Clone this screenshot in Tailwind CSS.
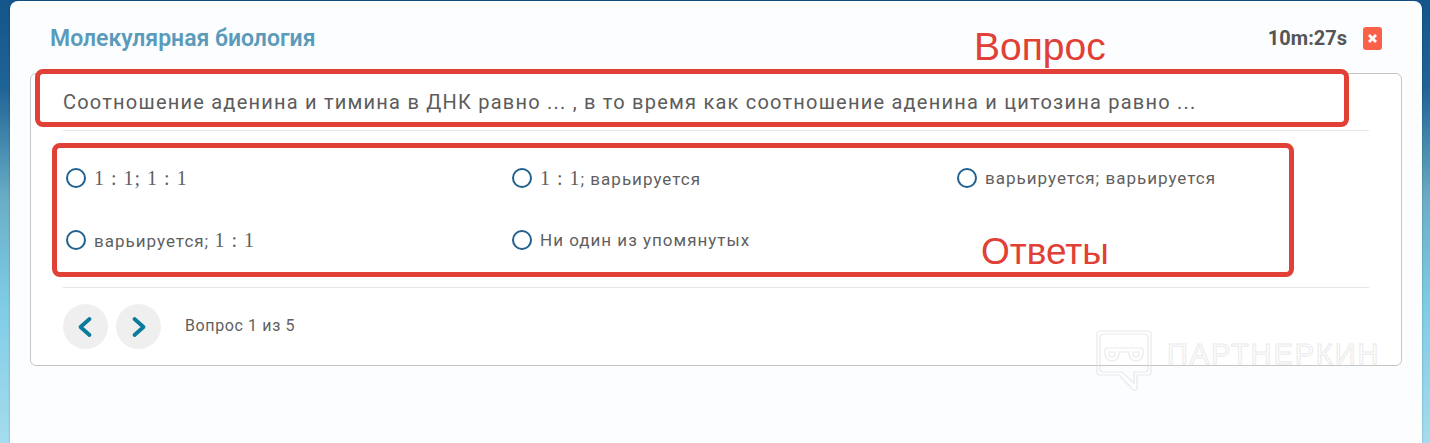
<!DOCTYPE html>
<html lang="ru">
<head>
<meta charset="utf-8">
<script src="https://cdn.jsdelivr.net/npm/@tailwindcss/browser@4"></script>
</head>
<body class="w-[1430px] h-[443px] overflow-hidden relative bg-[linear-gradient(180deg,#14558c_0%,#1f6496_20%,#6aaec6_45%,#7ecbe6_68%,#a5dcee_100%)] font-['Roboto',sans-serif]">
  <main class="ml-[10px] mt-px w-[1412px] h-[442px] rounded-t-lg bg-[#fbfdff] pt-[72px] px-5 relative shadow-[0_0_2px_rgba(0,0,0,0.35)]">
    <header class="absolute left-10 right-10 top-[24px] flex items-center justify-between h-[27px]">
      <h1 class="text-[23px] font-semibold text-[#5a9aba] leading-[27px]">Молекулярная биология</h1>
      <div class="flex items-center gap-4">
        <span class="text-[20px] font-bold text-[#555] leading-[27px]">10m:27s</span>
        <button class="w-[19px] h-[23px] rounded-[3px] bg-[#fb6148] flex items-center justify-center">
          <svg width="11" height="11" viewBox="0 0 11 11" fill="none" stroke="#fff" stroke-width="2.800"><path d="M2 2l7 7M9 2l-7 7"/></svg>
        </button>
      </div>
    </header>
    <section class="h-[293px] border border-[#c6c6c6] rounded-[6px] bg-white px-8">
      <div class="h-[57px] border-b border-[#e6e6e6] flex items-center">
        <p class="text-[20px] tracking-[1.22px] text-[#5c5c5c] leading-[56px] whitespace-nowrap">Соотношение аденина и тимина в ДНК равно ... , в то время как соотношение аденина и цитозина равно ...</p>
      </div>
      <div class="h-[157px] border-b border-[#e6e6e6] grid grid-cols-[446px_445px_1fr] grid-rows-[62px_62px] pt-4 pl-[3px] text-[17px] tracking-[1px] text-[#5f5f5f]">
        <label class="flex items-center gap-2"><span class="w-5 h-5 rounded-full border-2 border-[#21618f]"></span><span><span class="font-['Liberation_Serif',serif] text-[20px] tracking-[1px]">1 : 1; 1 : 1</span></span></label>
        <label class="flex items-center gap-2"><span class="w-5 h-5 rounded-full border-2 border-[#21618f]"></span><span><span class="font-['Liberation_Serif',serif] text-[20px] tracking-[1px]">1 : 1</span>; варьируется</span></label>
        <label class="flex items-center gap-2"><span class="w-5 h-5 rounded-full border-2 border-[#21618f]"></span><span class="pt-px">варьируется; варьируется</span></label>
        <label class="flex items-center gap-2"><span class="w-5 h-5 rounded-full border-2 border-[#21618f]"></span><span>варьируется; <span class="font-['Liberation_Serif',serif] text-[20px] tracking-[1px]">1 : 1</span></span></label>
        <label class="flex items-center gap-2"><span class="w-5 h-5 rounded-full border-2 border-[#21618f]"></span><span class="pt-px">Ни один из упомянутых</span></label>
      </div>
      <nav class="flex items-center h-[77px] gap-2">
        <button class="w-[45px] h-[45px] rounded-full bg-[#efefef] flex items-center justify-center">
          <svg class="-ml-[2px]" width="18" height="22" viewBox="0 0 18 22" fill="none" stroke="#0b7b9b" stroke-width="3.8" stroke-linecap="round" stroke-linejoin="round"><path d="M13.500 3l-9 8 9 8"/></svg>
        </button>
        <button class="w-[45px] h-[45px] rounded-full bg-[#efefef] flex items-center justify-center">
          <svg class="ml-[1px]" width="18" height="22" viewBox="0 0 18 22" fill="none" stroke="#0b7b9b" stroke-width="3.8" stroke-linecap="round" stroke-linejoin="round"><path d="M4.500 3l9 8-9 8"/></svg>
        </button>
        <span class="ml-4 pb-[2px] text-[16px] text-[#5f5f5f] tracking-[0.62px]">Вопрос 1 из 5</span>
      </nav>
    </section>
  </main>

  <!-- annotations over the screenshot -->
  <div class="absolute left-[35px] top-[69px] w-[1314px] h-[58px] border-[5px] border-[#e04035] rounded-[8px]"></div>
  <div class="absolute left-[52px] top-[143px] w-[1242px] h-[134px] border-[5px] border-[#e04035] rounded-[8px]"></div>
  <span class="absolute left-[974px] top-[25px] text-[39px] leading-[44px] text-[#e04035] font-['Liberation_Sans',sans-serif]">Вопрос</span>
  <span class="absolute left-[981px] top-[230px] text-[37px] leading-[44px] text-[#e04035] font-['Liberation_Sans',sans-serif]">Ответы</span>

  <!-- watermark -->
  <div class="absolute left-[1096px] top-[330px] flex items-start gap-[15px] opacity-60">
    <svg width="56" height="62" viewBox="0 0 56 62" fill="none" stroke="#ddd" stroke-width="1.2"><path d="M4 1h48a3 3 0 0 1 3 3v38a3 3 0 0 1-3 3H41v13a2.500 2.500 0 0 1-4.300 1.700L23 45H4a3 3 0 0 1-3-3V4a3 3 0 0 1 3-3z"/><path d="M7 4h42a3 3 0 0 1 3 3v32a3 3 0 0 1-3 3H38v11L26 42H7a3 3 0 0 1-3-3V7a3 3 0 0 1 3-3z"/><path d="M11 18h34a2 2 0 0 1 2 2v4a7 7 0 0 1-14 0v-2h-10v2a7 7 0 0 1-14 0v-4a2 2 0 0 1 2-2z"/><path d="M13 22h6v2a3 3 0 0 1-6 0zM37 22h6v2a3 3 0 0 1-6 0z"/></svg>
    <span class="mt-[10px] text-[29px] leading-[28px] tracking-[1.900px] font-['Liberation_Sans',sans-serif] text-transparent [-webkit-text-stroke:1px_#ddd]">ПАРТНЕРКИН</span>
  </div>
</body>
</html>
